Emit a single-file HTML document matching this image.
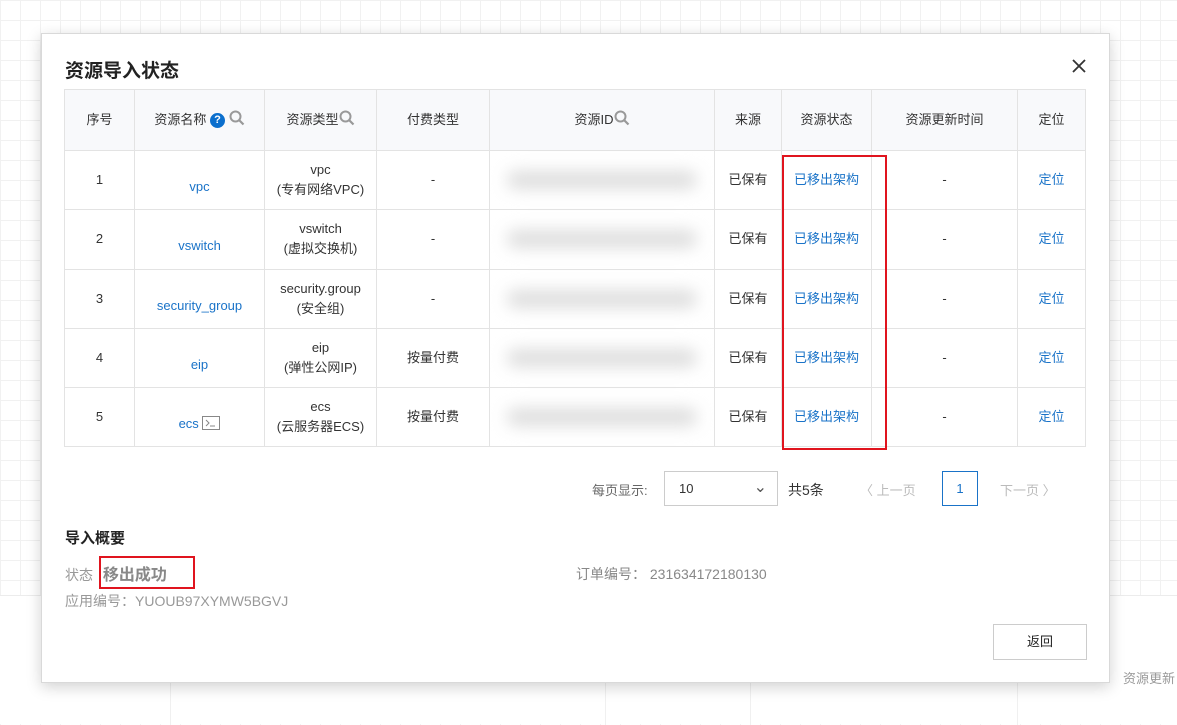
<!DOCTYPE html>
<html><head><meta charset="utf-8"><style>
*{box-sizing:border-box;margin:0;padding:0}
body{width:1177px;height:724px;overflow:hidden;position:relative;font-family:"Liberation Sans","Noto Sans CJK SC",sans-serif;font-size:13px;color:#333;
background-color:#fff;background-image:linear-gradient(#f1f1f1 1px,transparent 1px),linear-gradient(90deg,#f1f1f1 1px,transparent 1px);background-size:20px 20px}
.bot{position:absolute;left:0;top:595px;width:1177px;height:129px;background:#fff;border-top:1px solid #ececec}
.bot div{position:absolute;top:0;height:129px;border-left:1px solid #f0f0f0}
.modal{position:absolute;left:41px;top:33px;width:1069px;height:650px;background:#fff;border:1px solid #d9d9d9;box-shadow:0 4px 14px rgba(0,0,0,.18)}
.title{position:absolute;left:23px;top:22px;font-size:19px;font-weight:bold;color:#222}
.close{position:absolute;right:23px;top:25px}
table{position:absolute;left:22px;top:55px;border-collapse:collapse;table-layout:fixed}
td,th{border:1px solid #e3e3e3;text-align:center;font-weight:normal;font-size:13px;line-height:20px}
th{height:61px;background:#f8f9fb;color:#333}
td{height:59.3px;background:#fff}
a{color:#1a73c8;text-decoration:none}
.blur{width:190px;height:18px;margin:0 auto;background:#ddd;filter:blur(8px);border-radius:9px}
.q{display:inline-block;width:15px;height:15px;border-radius:50%;background:#0b6fcd;color:#fff;font-size:11px;font-weight:bold;line-height:15px;vertical-align:1px}
.red{position:absolute;border:2px solid #e0141e}
</style></head><body>
<div class="bot"><div style="left:170px"></div><div style="left:605px"></div><div style="left:750px"></div><div style="left:1017px"></div></div>
<div style="position:absolute;left:1123px;top:668px;color:#999;font-size:13px">资源更新</div>
<div class="modal">
<div class="title">资源导入状态</div>
<svg class="close" width="14" height="14" viewBox="0 0 14 14"><path d="M1 1l12 12M13 1L1 13" stroke="#333" stroke-width="1.8"/></svg>
<table>
<colgroup><col style="width:70px"><col style="width:130px"><col style="width:112px"><col style="width:113px"><col style="width:225px"><col style="width:67px"><col style="width:90px"><col style="width:146px"><col style="width:68px"></colgroup>
<tr><th>序号</th><th>资源名称 <span class="q">?</span> <svg width="16" height="16" viewBox="0 0 16 16" style="vertical-align:-2px"><circle cx="6.5" cy="6.5" r="5" fill="none" stroke="#999" stroke-width="2"/><path d="M10 10l4.5 4.5" stroke="#999" stroke-width="2.2"/></svg></th><th>资源类型<svg width="16" height="16" viewBox="0 0 16 16" style="vertical-align:-2px"><circle cx="6.5" cy="6.5" r="5" fill="none" stroke="#999" stroke-width="2"/><path d="M10 10l4.5 4.5" stroke="#999" stroke-width="2.2"/></svg></th><th>付费类型</th><th>资源ID<svg width="16" height="16" viewBox="0 0 16 16" style="vertical-align:-2px"><circle cx="6.5" cy="6.5" r="5" fill="none" stroke="#999" stroke-width="2"/><path d="M10 10l4.5 4.5" stroke="#999" stroke-width="2.2"/></svg></th><th>来源</th><th>资源状态</th><th>资源更新时间</th><th>定位</th></tr>
<tr><td>1</td><td><a style="position:relative;top:7px">vpc</a></td><td>vpc<br>(专有网络VPC)</td><td>-</td><td><div class="blur"></div></td><td>已保有</td><td><a>已移出架构</a></td><td>-</td><td><a>定位</a></td></tr>
<tr><td>2</td><td><a style="position:relative;top:7px">vswitch</a></td><td>vswitch<br>(虚拟交换机)</td><td>-</td><td><div class="blur"></div></td><td>已保有</td><td><a>已移出架构</a></td><td>-</td><td><a>定位</a></td></tr>
<tr><td>3</td><td><a style="position:relative;top:7px">security_group</a></td><td>security.group<br>(安全组)</td><td>-</td><td><div class="blur"></div></td><td>已保有</td><td><a>已移出架构</a></td><td>-</td><td><a>定位</a></td></tr>
<tr><td>4</td><td><a style="position:relative;top:7px">eip</a></td><td>eip<br>(弹性公网IP)</td><td>按量付费</td><td><div class="blur"></div></td><td>已保有</td><td><a>已移出架构</a></td><td>-</td><td><a>定位</a></td></tr>
<tr><td>5</td><td><span style="position:relative;top:7px"><a>ecs</a> <svg width="18" height="14" viewBox="0 0 18 14" style="vertical-align:-2px"><rect x="0.5" y="0.5" width="17" height="13" fill="none" stroke="#888"/><path d="M4 4l3 3-3 3M8 10h5" fill="none" stroke="#888"/></svg></span></td><td>ecs<br>(云服务器ECS)</td><td>按量付费</td><td><div class="blur"></div></td><td>已保有</td><td><a>已移出架构</a></td><td>-</td><td><a>定位</a></td></tr>
</table>
<div class="red" style="left:740px;top:121px;width:105px;height:295px"></div>
<div style="position:absolute;left:550px;top:446px;color:#666">每页显示:</div>
<div style="position:absolute;left:622px;top:437px;width:114px;height:35px;border:1px solid #ccc;padding:9px 14px;color:#333">10<span style="position:absolute;right:10px;top:5px;font-size:16px;color:#555">&#8964;</span></div>
<div style="position:absolute;left:746px;top:446px;font-size:14px;color:#333">共5条</div>
<div style="position:absolute;left:818px;top:446px;color:#bbb">〈 上一页</div>
<div style="position:absolute;left:900px;top:437px;width:36px;height:35px;border:1px solid #1a73c8;color:#1a73c8;text-align:center;line-height:33px">1</div>
<div style="position:absolute;left:958px;top:446px;color:#bbb">下一页 〉</div>
<div style="position:absolute;left:23px;top:493px;font-size:15px;font-weight:bold;color:#222">导入概要</div>
<div style="position:absolute;left:23px;top:527px;font-size:14px;color:#999">状态 <b style="font-size:16px;color:#888;margin-left:6px">移出成功</b></div>
<div class="red" style="left:57px;top:522px;width:96px;height:33px"></div>
<div style="position:absolute;left:534px;top:530px;font-size:14px;color:#888">订单编号： 231634172180130</div>
<div style="position:absolute;left:23px;top:557px;font-size:14px;color:#999">应用编号：YUOUB97XYMW5BGVJ</div>
<div style="position:absolute;left:951px;top:590px;width:94px;height:36px;border:1px solid #ccc;text-align:center;line-height:34px;font-size:13px;color:#222">返回</div>
</div>
</body></html>
